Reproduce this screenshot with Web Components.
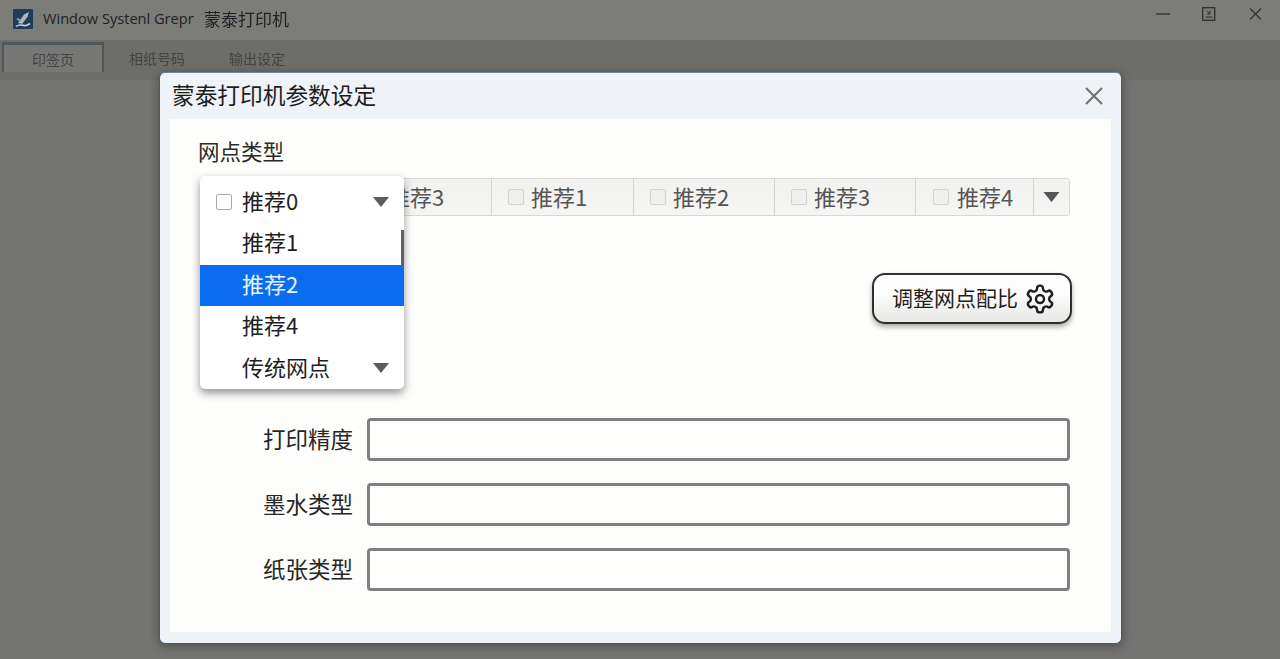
<!DOCTYPE html>
<html lang="zh-CN">
<head>
<meta charset="utf-8">
<title>蒙泰打印机</title>
<style>
  html, body { margin: 0; height: 100%; overflow: hidden; background: #737371; }
  body { font-family: "Noto Sans CJK SC", "Liberation Sans", sans-serif; }
</style>
</head>
<body>
<app-window>
  <print-dialog>
    <seg-bar></seg-bar>
    <drop-list></drop-list>
    <gear-button>调整网点配比</gear-button>
    <field-row>打印精度</field-row>
    <field-row>墨水类型</field-row>
    <field-row>纸张类型</field-row>
  </print-dialog>
</app-window>

<script>
'use strict';

(function() {
  const CJK = '"Noto Sans CJK SC", "Liberation Sans", sans-serif';

  const arrow = `<svg width="16" height="10" viewBox="0 0 16 10"><path d="M0 0H16L8 10Z" fill="#5c5c5c"/></svg>`;

  class AppWindow extends HTMLElement {
    constructor() {
      super();
      this.attachShadow({ mode: 'open' });
      this.shadowRoot.innerHTML = `
        <style>
          :host { display: flex; flex-direction: column; height: 659px; position: relative; font-family: ${CJK}; }
          .title { height: 40px; display: flex; align-items: center; padding: 0 0 4px 13px; background: #7c7c79; box-sizing: border-box; }
          .logo { width: 20px; height: 20px; margin: 2px 10px 0 0; flex: none; }
          .app { font: 14.6px "Open Sans", sans-serif; color: #1f2224; white-space: nowrap; width: 150px; margin-right: 11px; }
          .doc { font-size: 17px; color: #1f2224; filter: blur(.3px); }
          .controls { margin-left: auto; display: flex; align-items: center; gap: 32px; padding: 0 18px 9px 0; }
          .controls svg { display: block; }
          .tabs { height: 40px; display: flex; align-items: flex-start; padding: 2px 0 0 2px; background: #6d6d6a; box-sizing: border-box; }
          .tab { font-size: 14px; color: #434544; height: 30px; width: 106px; box-sizing: border-box; display: flex; align-items: center; justify-content: center; padding-bottom: 5px; filter: blur(.5px); margin-top: 3px; }
          .tab.on { width: 102px; height: 30px; margin-top: 0; padding-bottom: 0; border: 2px solid #50575b; border-top-width: 3px; border-bottom: 0; background: #777775; }
          .tab:last-child { width: 94px; }
          .content { flex: 1; background: #737371; }
        </style>
        <div class="title">
          <svg class="logo" viewBox="0 0 20 20">
            <rect width="20" height="20" rx="1" fill="#1f3c58"/>
            <path d="M5 14 11 5.5 16 3 14.5 8 9 15Z" fill="#a9b6c0"/>
            <path d="M4 9.5 7.5 12" stroke="#8ea0ae" stroke-width="1.6"/>
            <path d="M3 17.5C6 15 9 16 11 16.5 13 17 15 16 17 14.5" fill="none" stroke="#c3ccd3" stroke-width="1.6"/>
          </svg>
          <span class="app">Window Systenl Grepr</span>
          <span class="doc">蒙泰打印机</span>
          <div class="controls">
            <svg width="14" height="14" viewBox="0 0 14 14"><path d="M0 7H14" stroke="#2e2f2f" stroke-width="1.3"/></svg>
            <svg width="14" height="14" viewBox="0 0 14 14" fill="none" stroke="#2e2f2f"><rect x=".7" y=".7" width="12" height="12.6" stroke-width="1.3"/><path d="M4.5 3.5 7.5 6.5M8 3.5V7H5M3.5 10h7" stroke-width="1"/></svg>
            <svg width="14" height="14" viewBox="0 0 14 14"><path d="M2 1.5 13 12.5M13 1.5 2 12.5" stroke="#2e2f2f" stroke-width="1.2"/></svg>
          </div>
        </div>
        <div class="tabs">
          <div class="tab on">印签页</div>
          <div class="tab">相纸号码</div>
          <div class="tab">输出设定</div>
        </div>
        <div class="content"></div>
        <slot></slot>
      `;
    }
  }

  // The modal floats over the window, everything inside it is in flow
  class PrintDialog extends HTMLElement {
    constructor() {
      super();
      this.attachShadow({ mode: 'open' });
      this.shadowRoot.innerHTML = `
        <style>
          :host { display: flex; flex-direction: column; position: absolute; left: 159px; top: 72px; width: 963px; height: 572px; box-sizing: border-box; background: #eff2f6; border: 1px solid #3f5a7c; border-top-color: #6e86a0; border-radius: 6px; box-shadow: 0 2px 10px rgba(30,30,30,.45); font-family: ${CJK}; }
          .head { height: 46px; flex: none; display: flex; align-items: center; justify-content: space-between; padding: 0 17px 4px 12px; box-sizing: border-box; }
          .head span { font-size: 22.7px; color: #1d1d1d; }
          .head svg { display: block; margin-top: 4px; }
          .body { flex: 1; margin: 0 10px 11px; background: #fdfdfb; padding: 16px 41px 0 28px; position: relative; }
          .label { font-size: 21.5px; line-height: 32px; color: #2a2a2a; height: 32px; }
        </style>
        <div class="head">
          <span>蒙泰打印机参数设定</span>
          <svg width="20" height="20" viewBox="0 0 20 20"><path d="M2 2 18 18M18 2 2 18" stroke="#6f6f6f" stroke-width="2"/></svg>
        </div>
        <div class="body">
          <div class="label">网点类型</div>
          <slot></slot>
        </div>
      `;
    }
  }

  class SegBar extends HTMLElement {
    constructor() {
      super();
      this.attachShadow({ mode: 'open' });
      // first cell sits fully under the open list, so it has no label
      const items = [
        ['', 148], ['推荐3', 143], ['推荐1', 142], ['推荐2', 141], ['推荐3', 141], ['推荐4', 118]
      ];
      const cells = items.map(([name, w], i) =>
        `<div class="cell${i === 5 ? ' last' : ''}" style="width:${w}px">${name ? `<i></i><span>${name}</span>` : ''}</div>`
      ).join('');
      this.shadowRoot.innerHTML = `
        <style>
          :host { display: flex; height: 38px; margin: 11px 0 0 2px; box-sizing: border-box; background: linear-gradient(#f1f1ef, #f5f5f3); border: 1px solid #d8d8d5; border-radius: 3px; }
          .cell { display: flex; align-items: center; box-sizing: border-box; padding-left: 16px; gap: 7px; border-right: 1px solid #d4d4d1; font-size: 22px; color: #555; flex: none; }
          .cell span { margin-top: -3px; }
          .cell.last { gap: 8px; padding-left: 17px; }
          i { width: 16px; height: 16px; box-sizing: border-box; border: 1px solid #d2d2cf; background: #f0f0ee; border-radius: 2px; flex: none; }
          .more { flex: 1; display: flex; align-items: center; justify-content: center; }
          svg { display: block; }
        </style>
        ${cells}
        <div class="more"><svg width="17" height="10" viewBox="0 0 16 10"><path d="M0 0H16L8 10Z" fill="#555"/></svg></div>
      `;
    }
  }

  // Open combo list, lies over the segment bar
  class DropList extends HTMLElement {
    constructor() {
      super();
      this.attachShadow({ mode: 'open' });
      this.shadowRoot.innerHTML = `
        <style>
          :host { display: block; position: absolute; left: 30px; top: 57px; width: 204px; height: 213px; background: #fff; border-radius: 5px; box-shadow: 0 4px 9px rgba(60,60,60,.55); font-size: 22px; color: #1e1e1e; overflow: hidden; z-index: 2; }
          .row { height: 41.5px; display: flex; align-items: center; padding: 0 0 5px 42px; position: relative; box-sizing: border-box; }
          .row.first { height: 47px; padding: 0 0 0 16px; gap: 10px; }
          .row.sel { background: #0a6df0; color: #e8f3ff; }
          i { width: 16px; height: 16px; box-sizing: border-box; border: 1px solid #a8a8a8; border-radius: 2px; background: #fff; margin-top: 4px; }
          .first span { margin-top: 0; }
          svg { position: absolute; right: 15px; top: 50%; margin-top: -3px; display: block; }
          .last svg { margin-top: -5px; }
          .bar { position: absolute; right: 0; top: 54px; width: 3px; height: 35px; background: #5f5f5f; }
        </style>
        <div class="row first"><i></i><span>推荐0</span>${arrow}</div>
        <div class="row">推荐1</div>
        <div class="row sel">推荐2</div>
        <div class="row">推荐4</div>
        <div class="row last">传统网点${arrow}</div>
        <div class="bar"></div>
      `;
    }
  }

  class GearButton extends HTMLElement {
    constructor() {
      super();
      this.attachShadow({ mode: 'open' });
      this.shadowRoot.innerHTML = `
        <style>
          :host { display: flex; align-items: center; gap: 6px; width: 200px; height: 51px; box-sizing: border-box; margin: 57px -2px 0 auto; padding-left: 18px; border: 2px solid #2f2f2f; border-radius: 13px; background: linear-gradient(#fdfdfd 40%, #e6e6e4); box-shadow: 0 3px 5px rgba(70,70,70,.45); font-size: 21px; color: #1e1e1e; }
          .text { margin-top: -4px; white-space: nowrap; }
          svg { display: block; flex: none; }
        </style>
        <span class="text"><slot></slot></span>
        <svg width="32" height="32" viewBox="0 0 24 24" fill="none" stroke="#1e1e1e" stroke-width="1.8" stroke-linejoin="round">
          <path d="M12.22 2h-.44a2 2 0 0 0-2 2v.18a2 2 0 0 1-1 1.73l-.43.25a2 2 0 0 1-2 0l-.15-.08a2 2 0 0 0-2.73.73l-.22.38a2 2 0 0 0 .73 2.73l.15.1a2 2 0 0 1 1 1.72v.51a2 2 0 0 1-1 1.74l-.15.09a2 2 0 0 0-.73 2.73l.22.38a2 2 0 0 0 2.73.73l.15-.08a2 2 0 0 1 2 0l.43.25a2 2 0 0 1 1 1.73V20a2 2 0 0 0 2 2h.44a2 2 0 0 0 2-2v-.18a2 2 0 0 1 1-1.73l.43-.25a2 2 0 0 1 2 0l.15.08a2 2 0 0 0 2.73-.73l.22-.39a2 2 0 0 0-.73-2.73l-.15-.08a2 2 0 0 1-1-1.74v-.5a2 2 0 0 1 1-1.74l.15-.09a2 2 0 0 0 .73-2.73l-.22-.38a2 2 0 0 0-2.73-.73l-.15.08a2 2 0 0 1-2 0l-.43-.25a2 2 0 0 1-1-1.73V4a2 2 0 0 0-2-2z"/>
          <circle cx="12" cy="12" r="3"/>
        </svg>
      `;
    }
  }

  class FieldRow extends HTMLElement {
    constructor() {
      super();
      this.attachShadow({ mode: 'open' });
      this.shadowRoot.innerHTML = `
        <style>
          :host { display: grid; grid-template-columns: 155px 1fr; column-gap: 14px; align-items: center; height: 43px; margin-top: 22px; font-size: 22.5px; color: #262626; }
          :host(:first-of-type) { margin-top: 94px; }
          .label { text-align: right; padding: 0 0 4px 0; }
          .box { height: 43px; box-sizing: border-box; border: 3px solid #808080; border-radius: 4px; background: #fefefd; }
        </style>
        <div class="label"><slot></slot></div>
        <div class="box"></div>
      `;
    }
  }

  customElements.define('app-window', AppWindow);
  customElements.define('print-dialog', PrintDialog);
  customElements.define('seg-bar', SegBar);
  customElements.define('drop-list', DropList);
  customElements.define('gear-button', GearButton);
  customElements.define('field-row', FieldRow);
})();
</script>
</body>
</html>
